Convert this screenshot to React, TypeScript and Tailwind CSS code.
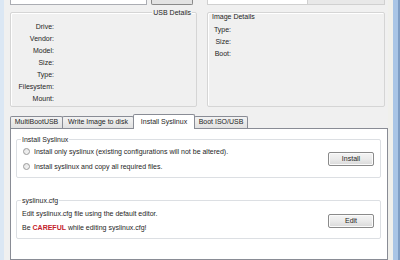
import React from "react";

const usbLabels = ["Drive:", "Vendor:", "Model:", "Size:", "Type:", "Filesystem:", "Mount:"];
const imageLabels = ["Type:", "Size:", "Boot:"];
const tabs = ["MultiBootUSB", "Write Image to disk", "Install Syslinux", "Boot ISO/USB"];
const tabWidths = ["w-[53px]", "w-[72px]", "w-[62px]", "w-[54px]"];

const WinButton = ({ label }: { label: string }) => (
  <button className="w-[46px] h-[14px] rounded-[2px] border border-[#8a8a8a] bg-gradient-to-b from-[#f4f4f4] via-[#ebebeb] to-[#d9d9d9] text-[7px] leading-[12px] text-[#1e1e1e] shadow-[inset_0_0_0_1px_#fbfbfb]">
    {label}
  </button>
);

const Radio = () => (
  <span className="w-[7px] h-[7px] rounded-full border border-[#9a9a9a] bg-gradient-to-br from-[#e4e4e4] to-[#f6f6f6] shrink-0" />
);

const GroupBox = ({ title, children }: { title: string; children: React.ReactNode }) => (
  <div className="relative border border-[#dcdfe3] rounded-[2px] bg-white">
    <span className="absolute -top-[5px] left-[4px] bg-white px-[1px] leading-[9px]">{title}</span>
    {children}
  </div>
);

export default function App() {
  return (
    <div className="w-[400px] h-[260px] flex bg-[#f0f0f0] overflow-hidden font-['Liberation_Sans',Arial,sans-serif] text-[7px] text-[#1e1e1e]">
      <div className="w-[4px] bg-[#dbe7f4]" />

      <div className="flex-1 flex flex-col pl-[6px]">
        {/* clipped row at the very top */}
        <div className="flex h-[5px] items-stretch">
          <div className="w-[137px] bg-white border-x border-b border-[#abadb3]" />
          <div className="ml-[4px] w-[42px] bg-[#e3e3e3] border-x border-b border-[#8a8a8a] rounded-b-[2px]" />
          <div className="ml-[14px] w-[100px] bg-white border-l border-b border-[#d0d0d0]" />
          <div className="w-[78px] bg-[#e8e8e8] border-x border-b border-[#d0d0d0]" />
        </div>

        {/* details */}
        <div className="flex gap-[10px] mt-[7px] h-[95px] w-[375px]">
          <div className="relative w-[187px] border border-[#d5d5d5] rounded-[2px] shadow-[inset_1px_1px_0_#fff]">
            <span className="absolute -top-[5px] right-[4px] bg-[#f0f0f0] px-[1px] leading-[9px]">USB Details</span>
            <div className="w-[43px] pt-[8px] flex flex-col items-end">
              {usbLabels.map((l) => (
                <span key={l} className="leading-[12px]">{l}</span>
              ))}
            </div>
          </div>
          <div className="flex-1 border border-[#d5d5d5] rounded-[2px] shadow-[inset_1px_1px_0_#fff]">
            <div className="pl-[4px] pt-[0px] leading-[7px]">Image Details</div>
            <div className="w-[23px] pt-[4px] flex flex-col items-end">
              {imageLabels.map((l) => (
                <span key={l} className="leading-[12px]">{l}</span>
              ))}
            </div>
          </div>
        </div>

        {/* tabs */}
        <div className="mt-[7px] flex items-end h-[14px]">
          {tabs.map((t, i) => {
            const active = i === 2;
            return (
              <div
                key={t}
                className={`${tabWidths[i]} ${i > 0 ? "-ml-[1px]" : ""} flex items-center justify-center border-x border-t border-[#898c95] rounded-t-[2px] ${
                  active
                    ? "relative z-10 h-[15px] -mb-[1px] bg-white"
                    : "h-[12px] bg-gradient-to-b from-[#f3f3f3] to-[#e1e1e1]"
                }`}
              >
                {t}
              </div>
            );
          })}
        </div>

        <div className="flex-1 bg-white border border-[#898c95] pl-[5px] pr-[6px] pt-[10px] flex flex-col">
          <GroupBox title="Install Syslinux">
            <div className="h-[37px] flex items-center pl-[6px] pr-[6px]">
              <div className="flex-1 flex flex-col gap-[6px] pt-[1px]">
                <label className="flex items-center gap-[4px] leading-[9px]">
                  <Radio />
                  Install only syslinux (existing configurations will not be altered).
                </label>
                <label className="flex items-center gap-[4px] leading-[9px]">
                  <Radio />
                  Install syslinux and copy all required files.
                </label>
              </div>
              <WinButton label="Install" />
            </div>
          </GroupBox>

          <div className="mt-[22px]">
            <GroupBox title="syslinux.cfg">
              <div className="h-[37px] flex items-center pl-[5px] pr-[6px]">
                <div className="flex-1 flex flex-col gap-[6px] pt-[3px]">
                  <span className="leading-[8px]">Edit syslinux.cfg file using the default editor.</span>
                  <span className="leading-[8px]">
                    Be <b className="text-[#c4212b]">CAREFUL</b> while editing syslinux.cfg!
                  </span>
                </div>
                <div className="pt-[2px]">
                  <WinButton label="Edit" />
                </div>
              </div>
            </GroupBox>
          </div>
        </div>
      </div>

      <div className="w-[5px] bg-[#f0f0ec]" />
      <div className="w-[5px] bg-[#a9c5e6]" />
      <div className="w-[2px] bg-[#7f9ec4]" />
    </div>
  );
}
